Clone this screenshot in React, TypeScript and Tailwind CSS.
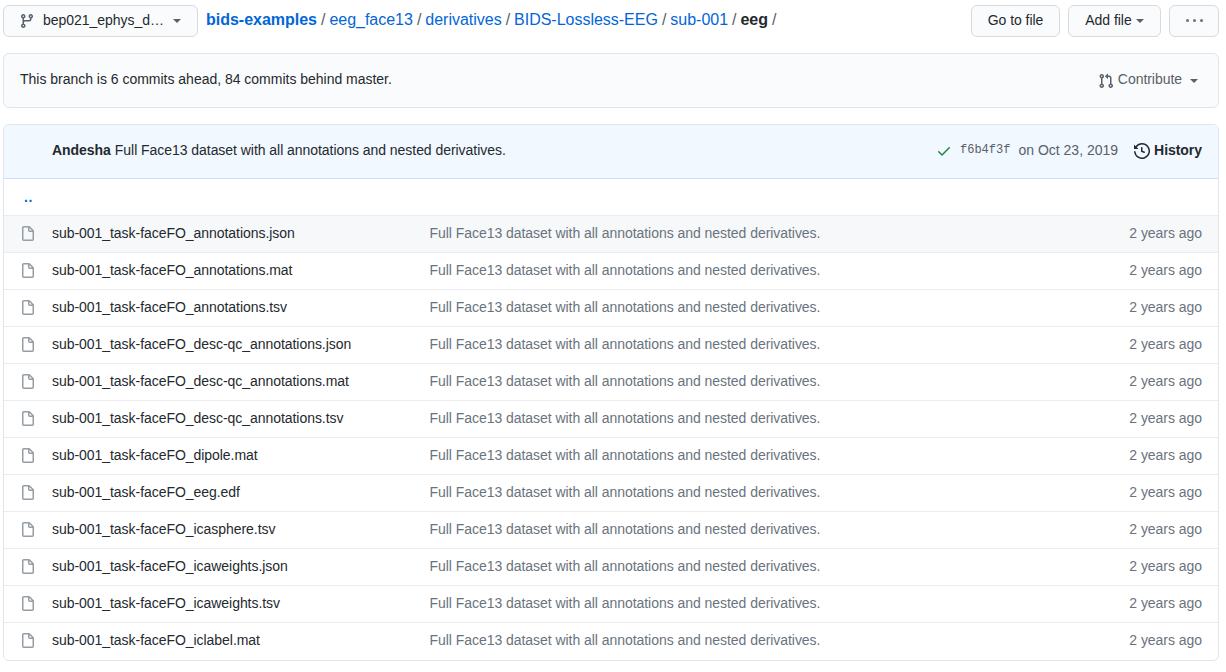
const files = [
  "sub-001_task-faceFO_annotations.json",
  "sub-001_task-faceFO_annotations.mat",
  "sub-001_task-faceFO_annotations.tsv",
  "sub-001_task-faceFO_desc-qc_annotations.json",
  "sub-001_task-faceFO_desc-qc_annotations.mat",
  "sub-001_task-faceFO_desc-qc_annotations.tsv",
  "sub-001_task-faceFO_dipole.mat",
  "sub-001_task-faceFO_eeg.edf",
  "sub-001_task-faceFO_icasphere.tsv",
  "sub-001_task-faceFO_icaweights.json",
  "sub-001_task-faceFO_icaweights.tsv",
  "sub-001_task-faceFO_iclabel.mat",
];

const message = "Full Face13 dataset with all annotations and nested derivatives.";

function Octicon({ d, className }: { d: string; className: string }) {
  return (
    <svg viewBox="0 0 16 16" width="16" height="16" fill="currentColor" className={className}>
      <path fillRule="evenodd" d={d} />
    </svg>
  );
}

function Caret({ className }: { className: string }) {
  return (
    <span className={`inline-block w-0 h-0 border-x-4 border-x-transparent border-t-4 ${className}`} />
  );
}

const branchIcon =
  "M11.75 2.5a.75.75 0 100 1.5.75.75 0 000-1.5zm-2.25.75a2.25 2.25 0 113 2.122V6A2.5 2.5 0 0110 8.5H6a1 1 0 00-1 1v1.128a2.251 2.251 0 11-1.5 0V5.372a2.25 2.25 0 111.5 0v1.836A2.492 2.492 0 016 7h4a1 1 0 001-1v-.628A2.25 2.25 0 019.5 3.25zM4.25 12a.75.75 0 100 1.5.75.75 0 000-1.5zM3.5 3.25a.75.75 0 111.5 0 .75.75 0 01-1.5 0z";
const pullIcon =
  "M7.177 3.073L9.573.677A.25.25 0 0110 .854v4.792a.25.25 0 01-.427.177L7.177 3.427a.25.25 0 010-.354zM3.75 2.5a.75.75 0 100 1.5.75.75 0 000-1.5zm-2.25.75a2.25 2.25 0 113 2.122v5.256a2.251 2.251 0 11-1.5 0V5.372A2.25 2.25 0 011.5 3.25zM11 2.5h-1V4h1a1 1 0 011 1v5.628a2.251 2.251 0 101.5 0V5A2.5 2.5 0 0011 2.5zm1 10.25a.75.75 0 111.5 0 .75.75 0 01-1.5 0zM3.75 12a.75.75 0 100 1.5.75.75 0 000-1.5z";
const checkIcon =
  "M13.78 4.22a.75.75 0 010 1.06l-7.25 7.25a.75.75 0 01-1.06 0L2.22 9.28a.75.75 0 011.06-1.06L6 10.94l6.72-6.72a.75.75 0 011.06 0z";
const historyIcon =
  "M1.643 3.143L.427 1.927A.25.25 0 000 2.104V5.75c0 .138.112.25.25.25h3.646a.25.25 0 00.177-.427L2.715 4.215a6.5 6.5 0 11-1.18 4.458.75.75 0 10-1.493.154 8.001 8.001 0 101.6-5.684zM7.75 4a.75.75 0 01.75.75v2.992l2.028.812a.75.75 0 01-.557 1.392l-2.5-1A.75.75 0 017 8.25v-3.5A.75.75 0 017.75 4z";
const fileIcon =
  "M3.75 1.5a.25.25 0 00-.25.25v11.5c0 .138.112.25.25.25h8.5a.25.25 0 00.25-.25V6H9.75A1.75 1.75 0 018 4.25V1.5H3.75zm5.75.56v2.19c0 .138.112.25.25.25h2.19L9.5 2.06zM2 1.75C2 .784 2.784 0 3.75 0h5.086c.464 0 .909.184 1.237.513l3.414 3.414c.329.328.513.773.513 1.237v8.086A1.75 1.75 0 0112.25 15h-8.5A1.75 1.75 0 012 13.25V1.75z";

const btn =
  "h-8 flex items-center justify-center rounded-md border border-[#d8dadc] bg-[#fafbfc] pb-px text-[14px] text-[#24292e]";

export default function App() {
  return (
    <div className="min-h-[672px] bg-white pt-[5px] pl-[3px] pr-[7px] font-['Liberation_Sans',Arial,sans-serif] text-[14px] leading-[21px] tracking-[-0.045px] text-[#24292e]">
      {/* top bar */}
      <div className="flex items-center h-8">
        <div className={`${btn} w-[195px] shrink-0`}>
          <Octicon d={branchIcon} className="text-[#586069] mr-[8px] -ml-px mt-px" />
          <span>bep021_ephys_d…</span>
          <Caret className="border-t-[#586069] ml-[9px] mt-px" />
        </div>
        <div className="ml-2 flex-1 text-[16px] leading-6 tracking-[-0.015px] text-[#586069] -mt-[3px] whitespace-nowrap">
          <span className="font-bold text-[#0366d6]">bids-examples</span>
          <span className="mx-[4px]">/</span>
          <span className="text-[#0366d6]">eeg_face13</span>
          <span className="mx-[4px]">/</span>
          <span className="text-[#0366d6]">derivatives</span>
          <span className="mx-[4px]">/</span>
          <span className="text-[#0366d6]">BIDS-Lossless-EEG</span>
          <span className="mx-[4px]">/</span>
          <span className="text-[#0366d6]">sub-001</span>
          <span className="mx-[4px]">/</span>
          <span className="font-bold text-[#24292e]">eeg</span>
          <span className="mx-[4px]">/</span>
        </div>
        <div className={`${btn} w-[89px]`}>Go to file</div>
        <div className={`${btn} w-[93px] ml-2`}>
          Add file
          <Caret className="border-t-[#586069] ml-[4px] mt-px" />
        </div>
        <div className={`${btn} w-[50px] ml-2 gap-[4px]`}>
          <span className="w-[3px] h-[3px] rounded-full bg-[#6a737d]" />
          <span className="w-[3px] h-[3px] rounded-full bg-[#6a737d]" />
          <span className="w-[3px] h-[3px] rounded-full bg-[#6a737d]" />
        </div>
      </div>

      {/* branch status */}
      <div className="mt-4 h-[55px] flex items-center justify-between rounded-md border border-[#e1e4e8] bg-[#fafbfc] pl-4 pr-5">
        <span className="-mt-[3px] tracking-[-0.015px]">This branch is 6 commits ahead, 84 commits behind master.</span>
        <div className="flex items-center text-[#586069] -mt-[2px]">
          <Octicon d={pullIcon} className="text-[#586069] mr-1 mt-[2px]" />
          <span>Contribute</span>
          <Caret className="border-t-[#586069] ml-[8px] mt-[3px]" />
        </div>
      </div>

      {/* file list */}
      <div className="mt-4 rounded-md border border-[#e1e4e8] pb-px">
        <div className="h-[54px] flex items-center rounded-t-md border-b border-[#c8e1ff] bg-[#f1f8ff] pl-12 pr-4 pb-[3px]">
          <span className="font-bold">Andesha</span>
          <span className="ml-1">{message}</span>
          <div className="ml-auto flex items-center text-[#586069]">
            <Octicon d={checkIcon} className="text-[#22863a] mr-2 mt-[2px]" />
            <span className="font-['Liberation_Mono',monospace] text-[12px] tracking-normal mr-2 mt-[1px]">f6b4f3f</span>
            <span className="tracking-normal">on Oct 23, 2019</span>
            <Octicon d={historyIcon} className="text-[#24292e] ml-4 mr-1 mt-px" />
            <span className="font-bold text-[#24292e]">History</span>
          </div>
        </div>

        <div className="h-9 flex items-center pl-[20px] text-[#0366d6]">
          <span className="font-bold tracking-[0.5px]">..</span>
        </div>

        {files.map((name, i) => (
          <div
            key={name}
            className={`h-[37px] flex items-center border-t border-[#eaecef] pl-4 pr-4 ${i === 0 ? "bg-[#f6f8fa]" : ""}`}
          >
            <Octicon d={fileIcon} className="text-[#959da5] shrink-0 mr-4" />
            <span className="w-[377.5px] shrink-0 whitespace-nowrap pb-[2px]">{name}</span>
            <span className="text-[#6a737d] whitespace-nowrap pb-[2px]">{message}</span>
            <span className="ml-auto text-[#6a737d] whitespace-nowrap pb-[2px]">2 years ago</span>
          </div>
        ))}
      </div>
    </div>
  );
}
